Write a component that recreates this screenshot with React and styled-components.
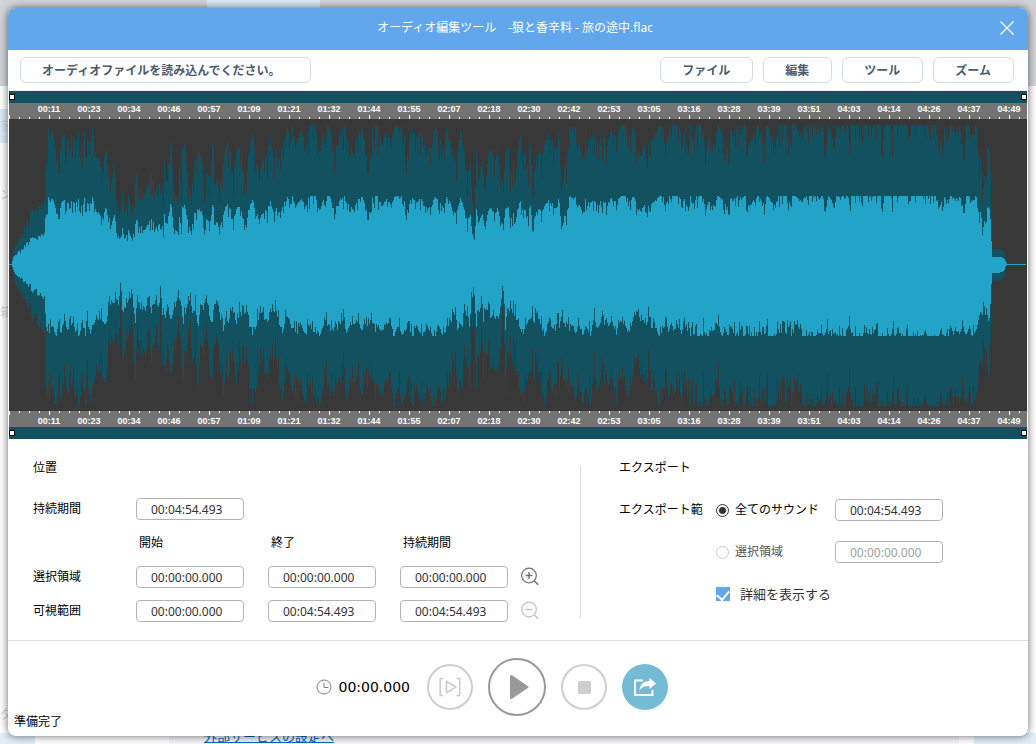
import React, { useState } from 'react';
import styled, { createGlobalStyle } from 'styled-components';

const TIMES = [
    '00:11', '00:23', '00:34', '00:46', '00:57', '01:09', '01:21', '01:32', '01:44',
    '01:55', '02:07', '02:18', '02:30', '02:42', '02:53', '03:05', '03:16', '03:28',
    '03:39', '03:51', '04:03', '04:14', '04:26', '04:37', '04:49',
];

const WAVE_W = 1018;
const WAVE_H = 292;
const MID = 145;
const MAX_UP = 139;
const MAX_DOWN = 142;

// peaks as [position, level] pairs, three units to a column
const UPPER = [
    [0, [27, 792, 35, 792, 37, 750, 48, 735, 60, 700, 78, 670, 93, 625, 100, 640, 115, 625, 125, 605, 133, 610, 135, 515, 142, 455, 145, 360, 152, 390, 160, 420, 175, 465, 190, 400, 200, 430, 215, 410, 225, 440, 232, 380, 240, 460, 252, 400, 265, 430, 276, 390, 283, 450, 290, 485, 297, 480, 303, 540, 315, 455, 325, 480, 330, 580, 342, 500, 350, 610, 360, 640, 366, 580, 376, 630, 385, 580, 395, 650, 401, 580, 408, 530, 420, 565, 435, 585, 447, 540, 457, 520, 463, 590, 475, 555, 490, 570, 493, 440, 499, 570, 511, 415, 520, 575, 530, 605, 538, 500, 543, 615, 547, 400, 555, 465, 565, 555, 575, 570, 583, 480, 590, 460, 605, 470, 612, 600, 618, 480, 628, 575, 637, 425, 645, 520, 655, 570, 665, 540, 672, 470, 679, 430, 690, 465, 697, 540, 710, 450, 722, 455, 730, 520, 738, 580, 745, 435, 757, 405, 765, 480, 780, 520, 790, 460, 800, 480, 808, 405, 820, 490, 830, 450, 840, 465, 850, 440, 858, 375, 870, 430, 878, 375, 890, 430, 905, 400, 918, 440, 928, 375, 948, 375, 955, 470, 970, 405, 985, 375, 1000, 450, 1010, 420, 1030, 390]],
    [1035, [0, 380, 10, 440, 25, 460, 37, 410, 50, 390, 60, 430, 75, 480, 82, 380, 95, 375, 110, 450, 120, 400, 135, 430, 150, 385, 175, 375, 184, 485, 200, 375, 215, 430, 225, 390, 240, 450, 250, 455, 262, 410, 272, 390, 285, 430, 295, 460, 305, 375, 315, 430, 322, 480, 335, 480, 346, 390, 355, 450, 365, 540, 375, 500, 380, 610, 388, 640, 391, 440, 400, 560, 405, 480, 412, 500, 420, 565, 430, 460, 438, 445, 448, 500, 457, 450, 465, 540, 473, 560, 475, 620, 478, 470, 490, 440, 497, 530, 505, 480, 508, 560, 515, 470, 523, 400, 530, 430, 540, 470, 548, 515, 555, 395, 560, 545, 570, 500, 578, 450, 590, 480, 600, 430, 610, 405, 622, 430, 635, 460, 640, 390, 648, 535, 655, 460, 663, 510, 672, 385, 683, 400, 690, 390, 700, 430, 712, 490, 718, 400, 733, 430, 745, 405, 757, 440, 770, 400, 785, 430, 800, 390, 812, 420, 825, 390, 843, 375, 855, 430, 863, 380, 880, 460, 890, 460, 900, 430, 912, 450, 920, 430, 935, 400, 947, 375, 965, 420, 975, 375, 1000, 375, 1010, 430, 1018, 400, 1030, 480]],
    [2070, [0, 370, 8, 390, 12, 465, 16, 375, 35, 370, 47, 460, 55, 420, 75, 450, 80, 380, 95, 400, 110, 455, 125, 380, 150, 390, 160, 375, 182, 435, 190, 380, 200, 375, 222, 440, 230, 375, 256, 450, 262, 375, 290, 380, 297, 420, 305, 370, 330, 410, 336, 370, 398, 365, 405, 430, 412, 370, 433, 450, 438, 375, 450, 400, 458, 365, 472, 375, 478, 440, 484, 365, 500, 385, 506, 365, 515, 400, 522, 360, 572, 365, 577, 460, 581, 365, 601, 365, 605, 435, 609, 350, 665, 350, 700, 370, 720, 380, 735, 375, 750, 435, 760, 390, 775, 365, 795, 400, 808, 375, 820, 470, 828, 365, 845, 420, 857, 370, 862, 480, 870, 480, 877, 570, 883, 520, 886, 570, 890, 460, 899, 435, 902, 580, 905, 750, 915, 748, 932, 750, 940, 758, 950, 790, 956, 793]],
];

const LOWER = [
    [0, [27, 44, 35, 44, 37, 75, 45, 100, 60, 130, 80, 165, 90, 200, 100, 220, 120, 230, 133, 250, 137, 400, 145, 465, 155, 395, 168, 475, 175, 370, 180, 475, 193, 350, 200, 430, 212, 400, 225, 440, 235, 475, 245, 400, 255, 475, 262, 390, 268, 475, 275, 420, 285, 370, 300, 360, 315, 410, 325, 300, 335, 260, 342, 280, 350, 240, 355, 290, 360, 150, 367, 340, 375, 300, 383, 260, 395, 230, 405, 390, 410, 240, 418, 290, 430, 360, 440, 270, 446, 220, 452, 340, 465, 260, 475, 300, 482, 195, 485, 330, 495, 400, 500, 265, 510, 370, 525, 320, 533, 230, 542, 265, 548, 405, 560, 280, 570, 255, 578, 350, 585, 290, 593, 420, 600, 280, 608, 330, 618, 220, 625, 330, 635, 400, 643, 280, 652, 260, 660, 370, 668, 450, 678, 320, 682, 420, 697, 310, 710, 410, 718, 330, 728, 370, 740, 310, 745, 400, 755, 460, 765, 420, 778, 340, 790, 340, 797, 430, 808, 330, 825, 320, 835, 370, 842, 475, 852, 400, 868, 370, 875, 440, 880, 420, 890, 460, 900, 380, 910, 440, 920, 460, 925, 395, 940, 440, 955, 475, 970, 400, 985, 400, 995, 460, 1005, 390, 1015, 450, 1030, 370]],
    [1035, [0, 475, 10, 410, 25, 390, 40, 375, 50, 460, 60, 420, 70, 390, 82, 385, 90, 450, 97, 405, 110, 440, 124, 395, 136, 380, 145, 475, 155, 410, 170, 460, 187, 420, 205, 475, 212, 395, 230, 475, 245, 400, 260, 480, 270, 480, 278, 405, 295, 475, 308, 400, 315, 440, 322, 360, 330, 370, 333, 440, 345, 390, 352, 410, 356, 305, 362, 400, 364, 290, 372, 410, 378, 260, 386, 190, 392, 420, 400, 330, 408, 290, 415, 410, 421, 310, 428, 350, 432, 315, 436, 465, 441, 350, 448, 390, 454, 340, 460, 370, 467, 260, 475, 190, 480, 430, 485, 320, 495, 320, 508, 345, 520, 400, 532, 460, 545, 390, 561, 340, 566, 430, 574, 325, 585, 400, 600, 475, 607, 375, 618, 410, 630, 430, 638, 360, 643, 430, 650, 320, 655, 430, 665, 390, 675, 450, 680, 390, 690, 460, 700, 390, 712, 460, 722, 400, 735, 475, 745, 360, 755, 420, 770, 380, 785, 410, 800, 380, 815, 475, 825, 375, 840, 400, 850, 460, 862, 375, 875, 400, 890, 360, 900, 430, 910, 360, 920, 430, 927, 400, 940, 475, 960, 400, 970, 440, 977, 380, 985, 440, 1000, 420, 1010, 460, 1015, 370, 1025, 450, 1030, 380]],
    [2070, [0, 470, 5, 370, 10, 480, 15, 400, 22, 480, 36, 480, 40, 415, 46, 480, 70, 430, 85, 400, 95, 475, 105, 420, 112, 470, 121, 400, 130, 450, 140, 480, 154, 410, 160, 480, 203, 485, 206, 390, 212, 475, 217, 390, 223, 475, 229, 390, 235, 480, 256, 475, 262, 400, 270, 475, 277, 410, 286, 480, 296, 395, 304, 480, 317, 390, 330, 430, 340, 480, 374, 485, 380, 440, 400, 470, 409, 420, 418, 480, 435, 440, 442, 485, 470, 470, 478, 405, 488, 480, 512, 485, 520, 440, 548, 460, 556, 415, 565, 485, 602, 480, 608, 395, 613, 485, 625, 430, 632, 485, 646, 485, 650, 405, 655, 485, 698, 480, 704, 415, 710, 485, 742, 480, 750, 430, 758, 485, 776, 480, 781, 380, 786, 480, 795, 410, 804, 485, 817, 395, 825, 470, 838, 400, 845, 475, 858, 430, 865, 360, 870, 320, 875, 345, 880, 310, 884, 355, 888, 330, 893, 380, 898, 360, 902, 220, 906, 95, 925, 95, 940, 85, 948, 50, 956, 44]],
];

function envelope(chunks, toHeight, limit, seed) {
    const points = chunks.flatMap(([start, values]) => {
        const list = [];
        for (let i = 0; i < values.length; i += 2) {
            list.push([(start + values[i] - 27) / 3, toHeight(values[i + 1])]);
        }
        return list;
    });
    let state = seed;
    let k = 0;
    return Array.from({ length: WAVE_W }, (_, x) => {
        while (k < points.length - 2 && points[k + 1][0] < x) k++;
        const [x0, h0] = points[k];
        const [x1, h1] = points[k + 1];
        const t = Math.min(1, Math.max(0, (x - x0) / (x1 - x0)));
        const base = h0 + (h1 - h0) * t;
        state = (state * 16807) % 2147483647;
        const r = state / 2147483647;
        const jitter = base < 24 ? 0 : Math.min(1, base / 90) * (3 - r * r * r * 28);
        return Math.round(Math.min(limit, Math.max(0, base + jitter)));
    });
}

const upper = envelope(UPPER, (v) => (793 - v) / 3, MAX_UP, 4711);
const lower = envelope(LOWER, (v) => (v - 44) / 3, MAX_DOWN, 977);

function wavePath(up, down) {
    let d = `M0 ${MID}`;
    upper.forEach((h, x) => { d += `V${MID - Math.round(h * up)}H${x + 1}`; });
    for (let x = WAVE_W - 1; x >= 0; x--) {
        d += `V${MID + Math.round(lower[x] * down)}H${x}`;
    }
    return `${d}Z`;
}

const PEAK_PATH = wavePath(1, 1);
const RMS_PATH = wavePath(0.49, 0.505);

function Ruler({ bottom }) {
    return (
        <RulerBar $bottom={bottom}>
            {TIMES.map((t) => <span key={t}>{t}</span>)}
        </RulerBar>
    );
}

function Magnifier({ minus }) {
    return (
        <svg width="20" height="20" viewBox="0 0 20 20" fill="none" stroke="currentColor" strokeWidth="1.2">
            <circle cx="9" cy="8.5" r="7.3" />
            <path d={minus ? 'M5.5 8.5h7' : 'M5.5 8.5h7M9 5v7'} strokeWidth="1.4" />
            <path d="M14.2 13.8l4 4" strokeWidth="1.6" />
        </svg>
    );
}

function App() {
    const [range, setRange] = useState('all');
    const [details, setDetails] = useState(true);

    return (
        <Desktop>
            <GlobalStyle />
            <Behind>
                <BackTop><BackTab /></BackTop>
                <BackMenu>
                    <BackItem $line={34} $active>を</BackItem>
                    <BackItem $line={104}>ン</BackItem>
                    <BackItem $line={132}>箱</BackItem>
                    <BackItem $line={36} $last>タ</BackItem>
                </BackMenu>
                <BackBottom>
                    <BackEdge />
                    <BackSheet><a href="#settings">外部サービスの設定へ</a></BackSheet>
                    <BackEdge $right />
                </BackBottom>
            </Behind>

            <Dialog>
                <TitleBar>
                    <h1>オーディオ編集ツール　-狼と香辛料 - 旅の途中.flac</h1>
                    <CloseButton aria-label="閉じる">
                        <svg width="14" height="14" viewBox="0 0 14 14" stroke="#fff" strokeWidth="1.2">
                            <path d="M.5.5l13 13M13.5.5l-13 13" />
                        </svg>
                    </CloseButton>
                </TitleBar>

                <Toolbar>
                    <ToolButton $wide>オーディオファイルを読み込んでください。</ToolButton>
                    <ToolButton>ファイル</ToolButton>
                    <ToolButton>編集</ToolButton>
                    <ToolButton>ツール</ToolButton>
                    <ToolButton>ズーム</ToolButton>
                </Toolbar>

                <Editor>
                    <RangeBar><Handle /><Handle /></RangeBar>
                    <Ruler />
                    <Wave viewBox={`0 0 ${WAVE_W} ${WAVE_H}`} preserveAspectRatio="none" shapeRendering="crispEdges">
                        <path d={PEAK_PATH} fill="#125160" />
                        <path d={RMS_PATH} fill="#22a3c8" />
                        <path d={`M0 145h${WAVE_W - 1}v1H0z`} fill="#22a3c8" />
                    </Wave>
                    <Ruler bottom />
                    <RangeBar><Handle /><Handle /></RangeBar>
                </Editor>

                <Panels>
                    <PositionPanel>
                        <PanelTitle>位置</PanelTitle>
                        <PositionGrid>
                            <label htmlFor="duration">持続期間</label>
                            <TimeInput id="duration" defaultValue="00:04:54.493" />
                            <i /><i /><i />

                            <i />
                            <ColumnName>開始</ColumnName>
                            <ColumnName>終了</ColumnName>
                            <ColumnName>持続期間</ColumnName>
                            <i />

                            <label htmlFor="sel-start">選択領域</label>
                            <TimeInput id="sel-start" defaultValue="00:00:00.000" />
                            <TimeInput aria-label="選択領域 終了" defaultValue="00:00:00.000" />
                            <TimeInput aria-label="選択領域 持続期間" defaultValue="00:00:00.000" />
                            <IconButton aria-label="拡大"><Magnifier /></IconButton>

                            <label htmlFor="view-start">可視範囲</label>
                            <TimeInput id="view-start" defaultValue="00:00:00.000" />
                            <TimeInput aria-label="可視範囲 終了" defaultValue="00:04:54.493" />
                            <TimeInput aria-label="可視範囲 持続期間" defaultValue="00:04:54.493" />
                            <IconButton aria-label="縮小" disabled><Magnifier minus /></IconButton>
                        </PositionGrid>
                    </PositionPanel>

                    <Separator />

                    <ExportPanel>
                        <PanelTitle>エクスポート</PanelTitle>
                        <ExportGrid>
                            <span>エクスポート範</span>
                            <Choice>
                                <Radio name="range" checked={range === 'all'} onChange={() => setRange('all')} />
                                全てのサウンド
                            </Choice>
                            <TimeInput aria-label="全てのサウンド" defaultValue="00:04:54.493" />

                            <i />
                            <Choice $dim>
                                <Radio name="range" disabled checked={range === 'selection'} onChange={() => setRange('selection')} />
                                選択領域
                            </Choice>
                            <TimeInput aria-label="選択領域" defaultValue="00:00:00.000" disabled />

                            <i />
                            <CheckChoice>
                                <Checkbox checked={details} onChange={(e) => setDetails(e.target.checked)} />
                                詳細を表示する
                            </CheckChoice>
                        </ExportGrid>
                    </ExportPanel>
                </Panels>

                <Footer>
                    <Transport>
                        <Clock>
                            <svg width="16" height="16" viewBox="0 0 16 16" fill="none" stroke="#808080">
                                <circle cx="8" cy="8" r="7" />
                                <path d="M8 3.5V8.5h4.5" />
                            </svg>
                            00:00.000
                        </Clock>
                        <Buttons>
                            <RoundButton aria-label="選択範囲を再生">
                                <svg width="22" height="20" viewBox="0 0 22 20" fill="none" stroke="#cecece" strokeWidth="1.7">
                                    <path d="M4.5 1.5H1.3v17h3.2M17.5 1.5h3.2v17h-3.2" />
                                    <path d="M7.5 4.200v11.600l9.500-5.800z" strokeLinejoin="round" />
                                </svg>
                            </RoundButton>
                            <RoundButton $large aria-label="再生">
                                <svg width="24" height="26" viewBox="0 0 24 26" fill="#999">
                                    <path d="M5 2.500q0-2.200 2-1.200L22.800 12q1.400 1 0 2L7 24.700q-2 1-2-1.200z" />
                                </svg>
                            </RoundButton>
                            <RoundButton aria-label="停止">
                                <svg width="13" height="13" viewBox="0 0 13 13" fill="#cecece">
                                    <rect width="13" height="13" rx="1.5" />
                                </svg>
                            </RoundButton>
                        </Buttons>
                        <RoundButton $filled aria-label="エクスポート">
                            <svg width="22" height="18" viewBox="0 0 22 18">
                                <path d="M9 2.500H1v14.500h17.500V12" fill="none" stroke="#fff" strokeWidth="2" />
                                <path d="M15.500 0L22 5.500 15.500 11V8C10.500 7.500 7.800 9.300 5.500 12.300 6 6.500 9.500 3.300 15.500 3z" fill="#fff" />
                            </svg>
                        </RoundButton>
                    </Transport>
                    <Status>準備完了</Status>
                </Footer>
            </Dialog>
        </Desktop>
    );
}

const GlobalStyle = createGlobalStyle`
  * {
    box-sizing: border-box;
  }

  body {
    margin: 0;
    background: #fff;
    color: #000;
    font: 12px/16px "Noto Sans", "Noto Sans CJK JP", sans-serif;
  }

  button, input {
    font: inherit;
    margin: 0;
  }

  button {
    cursor: pointer;
  }
`;

const Desktop = styled.div`
  position: relative;
  min-height: 100vh;
  padding: 8px;
  overflow: hidden;
`;

const Behind = styled.div`
  position: absolute;
  inset: 0;
  display: flex;
  flex-direction: column;
  background: #fff;
`;

const BackTop = styled.div`
  height: 86px;
  padding-left: 207px;
  background: #d4d5d9;
`;

const BackTab = styled.div`
  width: 113px;
  height: 8px;
  background: #dcebf8;
`;

const BackMenu = styled.div`
  flex: 1;
  display: flex;
  flex-direction: column;
  padding-top: 23px;
`;

const BackItem = styled.div`
  width: 14px;
  margin-top: ${(p) => (p.$last ? 'auto' : '0')};
  background: ${(p) => (p.$active ? '#dcebf8' : 'none')};
  color: #d2d6da;
  font-size: 12px;
  line-height: ${(p) => p.$line}px;
`;

const BackBottom = styled.div`
  display: flex;
  justify-content: space-between;
  height: 11px;
`;

const BackEdge = styled.div`
  width: ${(p) => (p.$right ? 62 : 35)}px;
  background: #e0eef6;
`;

const BackSheet = styled.div`
  flex: 1;
  display: flex;
  align-items: flex-end;
  margin: 0 15px 0 134px;
  padding-left: 35px;
  background: #f4f4f9;

  a {
    color: #0067c0;
    font-size: 13px;
    line-height: 16px;
  }
`;

const Dialog = styled.div`
  position: relative;
  border-radius: 8px;
  background: #fff;
  overflow: hidden;
  box-shadow: 0 0 8px rgba(0, 0, 0, 0.6);
`;

const TitleBar = styled.header`
  display: flex;
  align-items: center;
  height: 42px;
  padding: 0 14px 2px 22px;
  background: #62a7eb;

  h1 {
    flex: 1;
    margin: 0;
    color: #fff;
    font-size: 12px;
    font-weight: 400;
    text-align: center;
  }
`;

const CloseButton = styled.button`
  display: flex;
  padding: 0;
  border: 0;
  background: none;
`;

const Toolbar = styled.div`
  display: flex;
  gap: 10px;
  height: 41px;
  padding: 7px 14px 0 12px;
  border-bottom: 1px solid #eef0f2;
`;

const ToolButton = styled.button`
  height: 26px;
  padding: 1px 22px 0 21px;
  border: 1px solid #d5dbe4;
  border-radius: 6px;
  background: #fff;
  color: #4b5b6d;
  font-weight: 600;
  line-height: 16px;
  text-align: left;
  white-space: nowrap;
  ${(p) => p.$wide && 'width: 291px; margin-right: auto;'}
`;

const Editor = styled.div`
  margin: 0 1px;
`;

const RangeBar = styled.div`
  display: flex;
  align-items: center;
  justify-content: space-between;
  height: 12px;
  background: #125160;
`;

const Handle = styled.span`
  width: 6px;
  height: 6px;
  border: 1px solid #000;
  background: #fff;
`;

const RulerBar = styled.div`
  display: flex;
  height: 16px;
  padding-left: 20px;
  overflow: hidden;
  background-color: #737373;
  background-image:
    repeating-linear-gradient(to right, #fff 0 1px, transparent 1px 40px),
    repeating-linear-gradient(to right, #fff 0 1px, transparent 1px 10px);
  background-repeat: no-repeat;
  background-position: left ${(p) => (p.$bottom ? 'top' : 'bottom')};
  background-size: 100% 4px, 100% 2px;

  span {
    flex: 0 0 40px;
    padding-top: ${(p) => (p.$bottom ? 4 : 0)}px;
    color: #fff;
    font: bold 9px/12px "Liberation Sans", sans-serif;
    text-align: center;
  }
`;

const Wave = styled.svg`
  display: block;
  width: 100%;
  height: 292px;
  background: #383838;
`;

const Panels = styled.div`
  display: flex;
  height: 202px;
  padding-top: 8px;
  border-bottom: 1px solid #ddd;
`;

const PositionPanel = styled.section`
  flex: 0 0 572px;
  padding-left: 25px;
`;

const Separator = styled.div`
  width: 1px;
  margin: 19px 0 22px;
  background: #ddd;
`;

const ExportPanel = styled.section`
  flex: 1;
  padding-left: 38px;
`;

const PanelTitle = styled.h2`
  margin: 0;
  font-size: 12px;
  font-weight: 400;
  line-height: 42px;
`;

const PositionGrid = styled.div`
  display: grid;
  grid-template-columns: 103px 132px 132px 120px 20px;
  grid-auto-rows: 34px;
  align-items: center;
  padding-top: 3px;
`;

const ExportGrid = styled.div`
  display: grid;
  grid-template-columns: 97px 119px 108px;
  grid-auto-rows: 42px;
  align-items: center;
`;

const ColumnName = styled.span`
  padding-left: 3px;
`;

const TimeInput = styled.input`
  width: 108px;
  height: 22px;
  padding: 0 14px;
  border: 1px solid #b4b4b4;
  border-radius: 4px;
  background: #fff;
  color: #333;

  &:disabled {
    color: #a0a0a0;
  }
`;

const IconButton = styled.button`
  display: flex;
  padding: 0;
  border: 0;
  background: none;
  color: #707070;

  &:disabled {
    color: #c4c4c4;
  }
`;

const Choice = styled.label`
  display: flex;
  align-items: center;
  gap: 6px;
  color: ${(p) => (p.$dim ? '#555' : '#000')};
`;

const CheckChoice = styled(Choice)`
  grid-column: span 2;
  gap: 10px;
  color: #333;
  font-size: 13px;
`;

const Radio = styled.input.attrs({ type: 'radio' })`
  appearance: none;
  width: 13px;
  height: 13px;
  border: 1px solid #333;
  border-radius: 50%;
  background: #fff;

  &:checked {
    background: radial-gradient(circle, #333 0 3px, #fff 4px);
  }

  &:disabled {
    border-color: #ccc;
  }
`;

const Checkbox = styled.input.attrs({ type: 'checkbox' })`
  appearance: none;
  display: flex;
  align-items: flex-start;
  justify-content: center;
  width: 14px;
  height: 14px;
  border: 1px solid #62a7eb;

  &:checked {
    background: #62a7eb;
  }

  &:checked::after {
    content: '';
    width: 6px;
    height: 10px;
    border: solid #fff;
    border-width: 0 2px 2px 0;
    transform: rotate(40deg);
  }
`;

const Footer = styled.footer`
  padding: 17px 6px 8px;
`;

const Transport = styled.div`
  display: grid;
  grid-template-columns: 1fr auto 1fr;
  align-items: center;
  gap: 15px;
  padding-right: 2px;
`;

const Clock = styled.div`
  display: flex;
  align-items: center;
  justify-content: flex-end;
  gap: 6px;
  padding-right: 2px;
  font: 14px/16px "DejaVu Sans", sans-serif;
`;

const Buttons = styled.div`
  display: flex;
  align-items: center;
  gap: 15px;
`;

const RoundButton = styled.button`
  display: flex;
  align-items: center;
  justify-content: center;
  width: ${(p) => (p.$large ? 58 : 46)}px;
  height: ${(p) => (p.$large ? 58 : 46)}px;
  padding: 0;
  border: ${(p) => (p.$filled ? '0' : p.$large ? '2px solid #999' : '2px solid #cecece')};
  border-radius: 50%;
  background: ${(p) => (p.$filled ? '#74bcd5' : '#fff')};
`;

const Status = styled.div`
  line-height: 12px;
`;

export default App;
